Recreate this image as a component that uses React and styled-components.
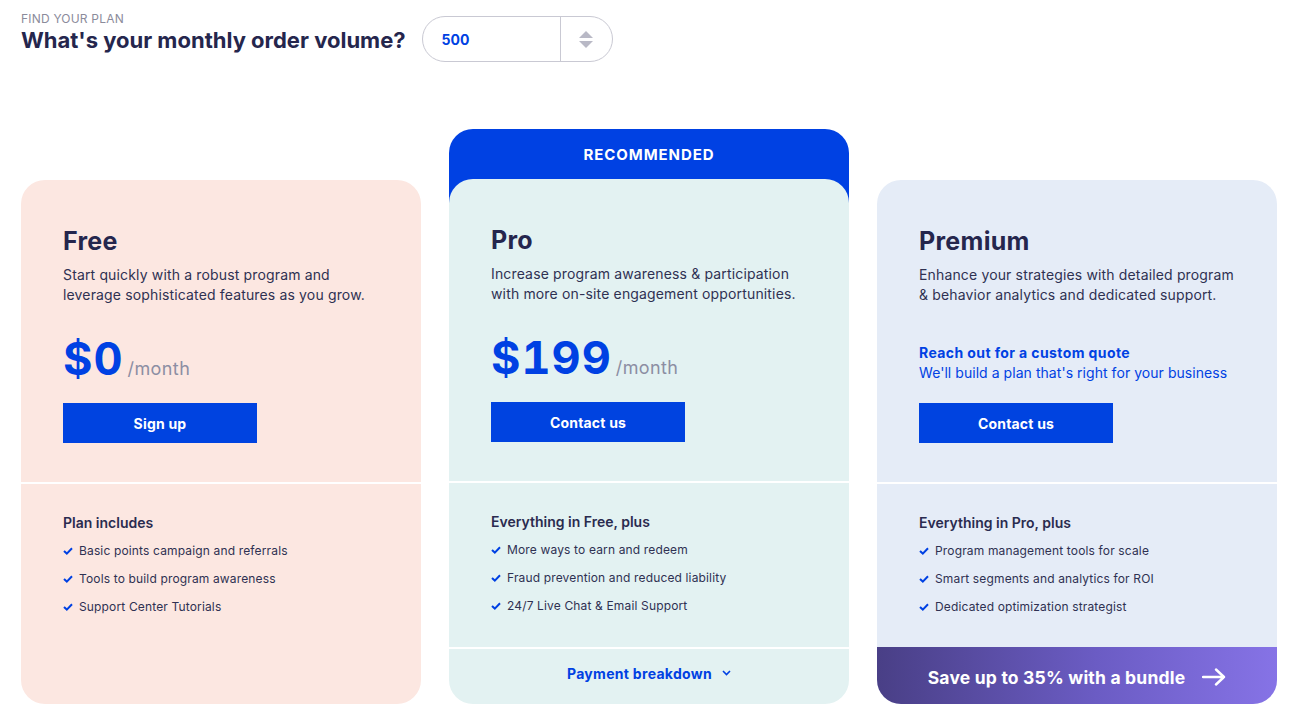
import React from "react";
import styled, { createGlobalStyle } from "styled-components";

const GlobalStyle = createGlobalStyle`
  * { box-sizing: border-box; }
  body {
    margin: 0;
    background: #ffffff;
    font-family: Inter, Lato, "Noto Sans", sans-serif;
    color: #25264d;
  }
`;

const plans = [
  {
    name: "Free",
    bg: "#fce7e1",
    description:
      "Start quickly with a robust program and leverage sophisticated features as you grow.",
    price: "$0",
    cta: "Sign up",
    includesTitle: "Plan includes",
    features: [
      "Basic points campaign and referrals",
      "Tools to build program awareness",
      "Support Center Tutorials",
    ],
  },
  {
    name: "Pro",
    bg: "#e3f2f2",
    recommended: true,
    description:
      "Increase program awareness & participation with more on-site engagement opportunities.",
    price: "$199",
    cta: "Contact us",
    includesTitle: "Everything in Free, plus",
    features: [
      "More ways to earn and redeem",
      "Fraud prevention and reduced liability",
      "24/7 Live Chat & Email Support",
    ],
    footer: "breakdown",
  },
  {
    name: "Premium",
    bg: "#e5ecf7",
    description:
      "Enhance your strategies with detailed program & behavior analytics and dedicated support.",
    quote: true,
    cta: "Contact us",
    includesTitle: "Everything in Pro, plus",
    features: [
      "Program management tools for scale",
      "Smart segments and analytics for ROI",
      "Dedicated optimization strategist",
    ],
    footer: "bundle",
  },
];

const Page = styled.div`
  padding: 12px 21px 0 21px;
`;

const Header = styled.header`
  display: flex;
  align-items: flex-start;
  gap: 16px;
`;

const HeadingBlock = styled.div`
  display: flex;
  flex-direction: column;
`;

const Eyebrow = styled.div`
  font-size: 12px;
  line-height: 14px;
  letter-spacing: 0.2px;
  color: #8b8b9b;
  text-transform: uppercase;
`;

const Heading = styled.h1`
  margin: 0;
  font-size: 22px;
  line-height: 28px;
  font-weight: 700;
  color: #25264d;
`;

const Stepper = styled.div`
  display: flex;
  align-items: stretch;
  width: 191px;
  height: 46px;
  border: 1px solid #c9c9d3;
  border-radius: 23px;
  margin-top: 4px;
  overflow: hidden;
`;

const StepperValue = styled.div`
  flex: 1;
  display: flex;
  align-items: center;
  padding-left: 19px;
  font-size: 14px;
  font-weight: 700;
  color: #0041e3;
  border-right: 1px solid #c9c9d3;
`;

const StepperArrows = styled.div`
  width: 51px;
  display: flex;
  flex-direction: column;
  align-items: center;
  justify-content: center;
  gap: 3px;
`;

const Row = styled.div`
  display: grid;
  grid-template-columns: repeat(3, 400px);
  gap: 28px;
  margin-top: 67px;
  align-items: stretch;
`;

const Column = styled.div`
  display: flex;
  flex-direction: column;
  padding-top: ${(p) => (p.$offset ? "51px" : "0")};
`;

const Badge = styled.div`
  height: 74px;
  padding-bottom: 24px;
  background: #0041e3;
  border-radius: 24px 24px 0 0;
  color: #ffffff;
  font-size: 15px;
  font-weight: 700;
  letter-spacing: 0.9px;
  display: flex;
  align-items: center;
  justify-content: center;
  text-transform: uppercase;
`;

const Card = styled.div`
  flex: 1;
  display: flex;
  flex-direction: column;
  background: ${(p) => p.$bg};
  border-radius: 24px;
  overflow: hidden;
  margin-top: ${(p) => (p.$raised ? "-24px" : "0")};
  position: relative;
`;

const Top = styled.div`
  height: 304px;
  display: flex;
  flex-direction: column;
  padding: 46px 42px 39px 42px;
  border-bottom: 2px solid #ffffff;
`;

const PlanName = styled.h2`
  margin: 0;
  font-size: 25px;
  line-height: 30px;
  letter-spacing: 0.3px;
  font-weight: 700;
  color: #25264d;
`;

const Description = styled.p`
  margin: 9px 0 0 0;
  font-size: 14px;
  line-height: 20px;
  letter-spacing: 0.15px;
  color: #2f3152;
  max-width: 320px;
`;

const Price = styled.div`
  margin-top: auto;
  display: flex;
  align-items: baseline;
  gap: 4px;
`;

const Amount = styled.span`
  font-size: 45px;
  line-height: 48px;
  font-weight: 700;
  letter-spacing: 1px;
  font-variant-numeric: tabular-nums;
  color: #0041e3;
`;

const Per = styled.span`
  font-size: 18px;
  letter-spacing: 0.4px;
  color: #8c8ea3;
`;

const Quote = styled.div`
  margin-top: auto;
  font-size: 14px;
  line-height: 20px;
  letter-spacing: 0.05px;
  color: #0041e3;
  strong {
    font-weight: 700;
    letter-spacing: 0.4px;
    display: block;
  }
`;

const Button = styled.button`
  margin-top: 20px;
  width: 194px;
  height: 40px;
  border: 0;
  background: #0043e0;
  color: #ffffff;
  font-family: inherit;
  font-size: 14px;
  font-weight: 700;
  letter-spacing: 0.2px;
  cursor: pointer;
`;

const Features = styled.div`
  flex: 1;
  padding: 29px 42px 30px 42px;
  display: flex;
  flex-direction: column;
`;

const FeaturesTitle = styled.div`
  font-size: 14px;
  line-height: 20px;
  font-weight: 600;
  color: #2a2b4f;
`;

const List = styled.ul`
  list-style: none;
  margin: 8px 0 0 0;
  padding: 0;
  display: flex;
  flex-direction: column;
  gap: 8px;
`;

const Item = styled.li`
  display: flex;
  align-items: center;
  gap: 6px;
  font-size: 12px;
  line-height: 20px;
  letter-spacing: 0.15px;
  color: #2f3152;
  svg {
    flex: none;
  }
`;

const BreakdownFooter = styled.div`
  height: 57px;
  padding-bottom: 7px;
  border-top: 2px solid #ffffff;
  display: flex;
  align-items: center;
  justify-content: center;
  gap: 10px;
  font-size: 14px;
  font-weight: 700;
  letter-spacing: 0.3px;
  color: #0041e3;
  cursor: pointer;
`;

const BundleFooter = styled.div`
  height: 57px;
  padding-top: 3px;
  display: flex;
  align-items: center;
  justify-content: center;
  gap: 17px;
  background: linear-gradient(90deg, #493f86 0%, #6b5cc4 55%, #8673e6 100%);
  color: #ffffff;
  font-size: 17.5px;
  font-weight: 700;
  letter-spacing: 0.2px;
  cursor: pointer;
`;

const Check = () => (
  <svg width="10" height="8" viewBox="0 0 10 8">
    <polyline
      points="1,4 3.8,6.6 9,1.2"
      fill="none"
      stroke="#0041e3"
      strokeWidth="2"
    />
  </svg>
);

const Chevron = () => (
  <svg width="9" height="6" viewBox="0 0 9 6">
    <polyline points="1,1 4.5,4.5 8,1" fill="none" stroke="#0041e3" strokeWidth="1.6" />
  </svg>
);

const Arrow = () => (
  <svg width="24" height="18" viewBox="0 0 24 18">
    <path
      d="M1 9 H22 M14 1.5 L22 9 L14 16.5"
      fill="none"
      stroke="#ffffff"
      strokeWidth="2.4"
      strokeLinecap="round"
      strokeLinejoin="round"
    />
  </svg>
);

function PlanCard({ plan }) {
  return (
    <Column $offset={!plan.recommended}>
      {plan.recommended && <Badge>Recommended</Badge>}
      <Card $bg={plan.bg} $raised={plan.recommended}>
        <Top>
          <PlanName>{plan.name}</PlanName>
          <Description>{plan.description}</Description>
          {plan.quote ? (
            <Quote>
              <strong>Reach out for a custom quote</strong>
              We'll build a plan that's right for your business
            </Quote>
          ) : (
            <Price>
              <Amount>{plan.price}</Amount>
              <Per>/month</Per>
            </Price>
          )}
          <Button>{plan.cta}</Button>
        </Top>
        <Features>
          <FeaturesTitle>{plan.includesTitle}</FeaturesTitle>
          <List>
            {plan.features.map((f) => (
              <Item key={f}>
                <Check />
                {f}
              </Item>
            ))}
          </List>
        </Features>
        {plan.footer === "breakdown" && (
          <BreakdownFooter>
            Payment breakdown <Chevron />
          </BreakdownFooter>
        )}
        {plan.footer === "bundle" && (
          <BundleFooter>
            Save up to 35% with a bundle <Arrow />
          </BundleFooter>
        )}
      </Card>
    </Column>
  );
}

export default function App() {
  return (
    <>
      <GlobalStyle />
      <Page>
        <Header>
          <HeadingBlock>
            <Eyebrow>Find your plan</Eyebrow>
            <Heading>What's your monthly order volume?</Heading>
          </HeadingBlock>
          <Stepper>
            <StepperValue>500</StepperValue>
            <StepperArrows>
              <svg width="14" height="7" viewBox="0 0 14 7">
                <polygon points="7,0 14,7 0,7" fill="#b9b9c6" />
              </svg>
              <svg width="14" height="7" viewBox="0 0 14 7">
                <polygon points="0,0 14,0 7,7" fill="#b9b9c6" />
              </svg>
            </StepperArrows>
          </Stepper>
        </Header>
        <Row>
          {plans.map((p) => (
            <PlanCard key={p.name} plan={p} />
          ))}
        </Row>
      </Page>
    </>
  );
}
